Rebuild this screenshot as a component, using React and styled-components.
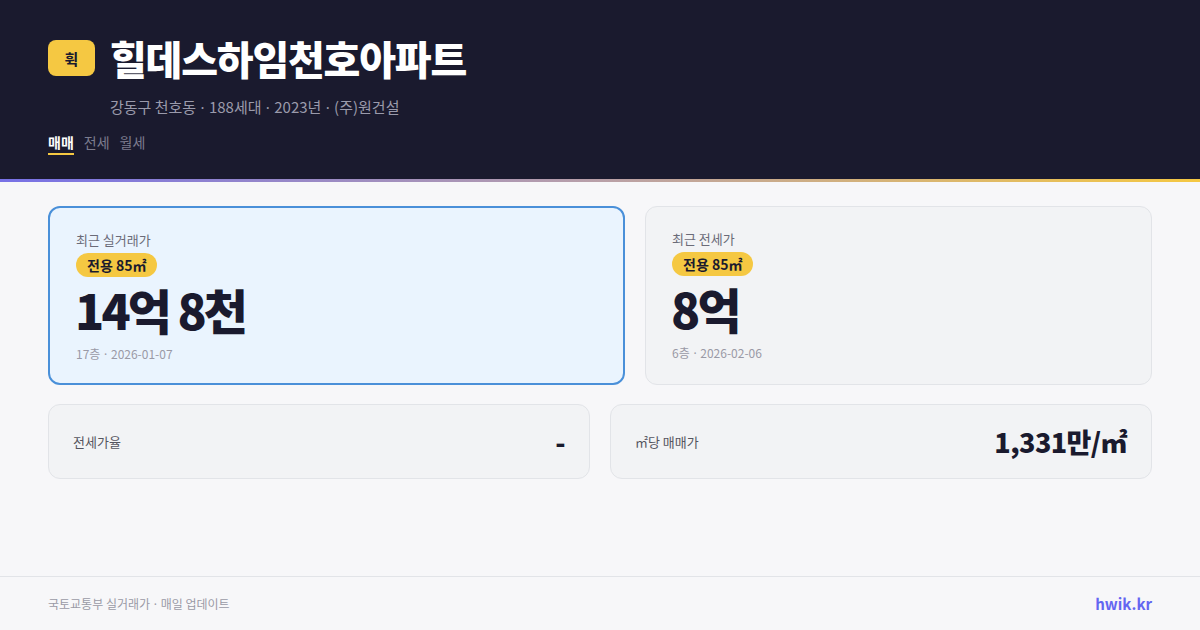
import React from "react";
import styled, { createGlobalStyle } from "styled-components";

const GlobalStyle = createGlobalStyle`
  html, body {
    margin: 0;
    padding: 0;
    background: #f7f7f9;
    font-family: "Noto Sans CJK KR", "Noto Sans", sans-serif;
  }
  * { box-sizing: border-box; }
`;

const Page = styled.div`
  width: 1200px;
  height: 630px;
  display: flex;
  flex-direction: column;
  background: #f7f7f9;
`;

const Header = styled.header`
  background: #1a1a2e;
  padding: 34px 48px 24px;
  border-bottom: 3px solid transparent;
  border-image: linear-gradient(90deg, #7771e6, #b9a0a8 50%, #f5c842) 1;
`;

const TitleRow = styled.div`
  display: flex;
  align-items: center;
  gap: 15px;
`;

const Logo = styled.div`
  width: 47px;
  height: 36px;
  border-radius: 8px;
  background: #f5c842;
  color: #1a1a2e;
  font-size: 15px;
  font-weight: 700;
  display: flex;
  align-items: center;
  justify-content: center;
`;

const Title = styled.h1`
  margin: 0;
  color: #ffffff;
  font-size: 40px;
  line-height: 48px;
  font-weight: 800;
  letter-spacing: -1.2px;
`;

const Subtitle = styled.div`
  margin: 14px 0 0 62px;
  color: #9a9aab;
  font-size: 15px;
  line-height: 22px;
`;

// the middle dot is narrow in the reference, take it from a latin face
const Dot = styled.span`
  font-family: "Noto Sans", sans-serif;
  margin: 0 1px;
`;

const Tabs = styled.nav`
  display: flex;
  gap: 10px;
  margin-top: 14px;
`;

const Tab = styled.span`
  font-size: 14px;
  line-height: 20px;
  padding-bottom: 1px;
  font-weight: ${(p) => (p.$active ? 700 : 400)};
  color: ${(p) => (p.$active ? "#ffffff" : "#7c7c8e")};
  border-bottom: 2px solid ${(p) => (p.$active ? "#f5c842" : "transparent")};
`;

const Main = styled.main`
  flex: 1;
  padding: 24px 48px 0;
  display: flex;
  flex-direction: column;
  gap: 19px;
`;

const TopRow = styled.div`
  display: grid;
  grid-template-columns: 577px 1fr;
  gap: 20px;
`;

const PriceCard = styled.div`
  height: 179px;
  border-radius: 12px;
  padding: 22px 26px;
  background: ${(p) => (p.$highlight ? "#eaf4fe" : "#f2f3f5")};
  border: ${(p) => (p.$highlight ? "2px solid #4a90d9" : "1px solid #e2e4e8")};
  display: flex;
  flex-direction: column;
  align-items: flex-start;
`;

const Label = styled.div`
  font-size: 13px;
  line-height: 20px;
  color: #6b6b78;
`;

const Pill = styled.span`
  margin-top: 3px;
  padding: 0 11px;
  height: 24px;
  border-radius: 12px;
  background: #f5c842;
  color: #1a1a2e;
  font-size: 14px;
  font-weight: 700;
  line-height: 24px;
`;

const BigPrice = styled.div`
  margin-top: 8px;
  margin-left: -1px;
  font-size: 48px;
  line-height: 48px;
  font-weight: 800;
  color: #1a1a2e;
  letter-spacing: -2.8px;
`;

const Meta = styled.div`
  margin-top: 12px;
  font-size: 12px;
  line-height: 18px;
  color: #9a9aa6;
`;

const BottomRow = styled.div`
  display: grid;
  grid-template-columns: 1fr 1fr;
  gap: 20px;
`;

const StatCard = styled.div`
  height: 75px;
  border-radius: 12px;
  border: 1px solid #e2e4e8;
  background: #f2f3f5;
  padding: 0 24px;
  display: flex;
  align-items: center;
  justify-content: space-between;
`;

const StatLabel = styled.span`
  font-size: 13px;
  color: #55555f;
`;

const StatValue = styled.span`
  font-size: 27px;
  font-weight: 800;
  color: #1a1a2e;
  letter-spacing: -0.6px;
`;

const Footer = styled.footer`
  height: 54px;
  border-top: 1px solid #e2e4e8;
  padding: 0 48px;
  display: flex;
  align-items: center;
  justify-content: space-between;
`;

const Source = styled.span`
  font-size: 12px;
  color: #9a9aa6;
`;

const Brand = styled.span`
  font-size: 15px;
  font-weight: 700;
  color: #6366f1;
`;

export default function App() {
  return (
    <Page>
      <GlobalStyle />
      <Header>
        <TitleRow>
          <Logo>휙</Logo>
          <Title>힐데스하임천호아파트</Title>
        </TitleRow>
        <Subtitle>
          강동구 천호동 <Dot>·</Dot> 188세대 <Dot>·</Dot> 2023년 <Dot>·</Dot> (주)원건설
        </Subtitle>
        <Tabs>
          <Tab $active>매매</Tab>
          <Tab>전세</Tab>
          <Tab>월세</Tab>
        </Tabs>
      </Header>
      <Main>
        <TopRow>
          <PriceCard $highlight>
            <Label>최근 실거래가</Label>
            <Pill>전용 85㎡</Pill>
            <BigPrice>14억 8천</BigPrice>
            <Meta>17층 <Dot>·</Dot> 2026-01-07</Meta>
          </PriceCard>
          <PriceCard>
            <Label>최근 전세가</Label>
            <Pill>전용 85㎡</Pill>
            <BigPrice>8억</BigPrice>
            <Meta>6층 <Dot>·</Dot> 2026-02-06</Meta>
          </PriceCard>
        </TopRow>
        <BottomRow>
          <StatCard>
            <StatLabel>전세가율</StatLabel>
            <StatValue>-</StatValue>
          </StatCard>
          <StatCard>
            <StatLabel>㎡당 매매가</StatLabel>
            <StatValue>1,331만/㎡</StatValue>
          </StatCard>
        </BottomRow>
      </Main>
      <Footer>
        <Source>국토교통부 실거래가 <Dot>·</Dot> 매일 업데이트</Source>
        <Brand>hwik.kr</Brand>
      </Footer>
    </Page>
  );
}
